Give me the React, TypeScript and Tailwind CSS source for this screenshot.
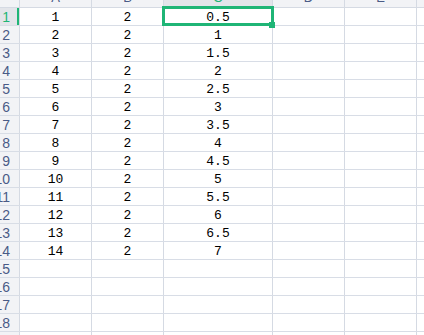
import React from "react";

const COLS = [
  { key: "A", w: "w-[72px]" },
  { key: "B", w: "w-[72px]" },
  { key: "C", w: "w-[109px]" },
  { key: "D", w: "w-[72px]" },
  { key: "E", w: "w-[72px]" },
];

const ROWS = Array.from({ length: 19 }, (_, i) => i + 1);

const cellText = (row: number, col: string) => {
  if (row > 14) return "";
  if (col === "A") return String(row);
  if (col === "B") return "2";
  if (col === "C") return String(row / 2);
  return "";
};

const App: React.FC = () => {
  return (
    <div className="relative w-[424px] h-[335px] overflow-hidden bg-white">
      {/* COLUMN HEADER */}
      <div className="flex h-[22px] mt-[-14px] bg-[#f2f3f6] border-b border-[#d5dae3]">
        <div className="w-[20px] shrink-0 border-r border-[#d5dae3]" />
        {COLS.map((c) => (
          <div
            key={c.key}
            className={`${c.w} shrink-0 flex items-end justify-center pb-[3px] border-r border-[#d5dae3] text-[13px] leading-none font-['Liberation_Sans',sans-serif] ${
              c.key === "C" ? "bg-[#e3e5ea] text-[#1fb576]" : "text-[#4a5b86]"
            }`}
          >
            {c.key}
          </div>
        ))}
        <div className="flex-1" />
      </div>

      {/* ROWS */}
      {ROWS.map((r) => (
        <div key={r} className="flex h-[18px] border-b border-[#d8dde6]">
          <div
            className={`w-[20px] shrink-0 relative overflow-hidden border-r border-[#d5dae3] ${
              r === 1 ? "bg-[#e3e5ea]" : "bg-[#f2f3f6]"
            }`}
          >
            <span
              className={`absolute right-[9px] top-0 h-full flex items-center whitespace-nowrap text-[14px] leading-none font-['Liberation_Sans',sans-serif] ${
                r === 1 ? "text-[#1fb576]" : "text-[#4a5b86]"
              }`}
            >
              {r}
            </span>
            {r === 1 && (
              <div className="absolute right-0 top-0 h-full w-[2px] bg-[#1fb576]" />
            )}
          </div>
          {COLS.map((c) => (
            <div
              key={c.key}
              className={`${c.w} shrink-0 flex items-center justify-center pt-[2px] border-r border-[#d5dae3] text-[13px] leading-none text-black font-['Liberation_Mono',monospace]`}
            >
              {cellText(r, c.key)}
            </div>
          ))}
          <div className="flex-1" />
        </div>
      ))}

      {/* SELECTION */}
      <div className="absolute left-[162px] top-[6px] w-[112px] h-[20px] border-[3px] border-[#1fb576]" />
      <div className="absolute left-[269px] top-[22px] w-[6px] h-[6px] bg-[#1fb576]" />
    </div>
  );
};

export default App;
